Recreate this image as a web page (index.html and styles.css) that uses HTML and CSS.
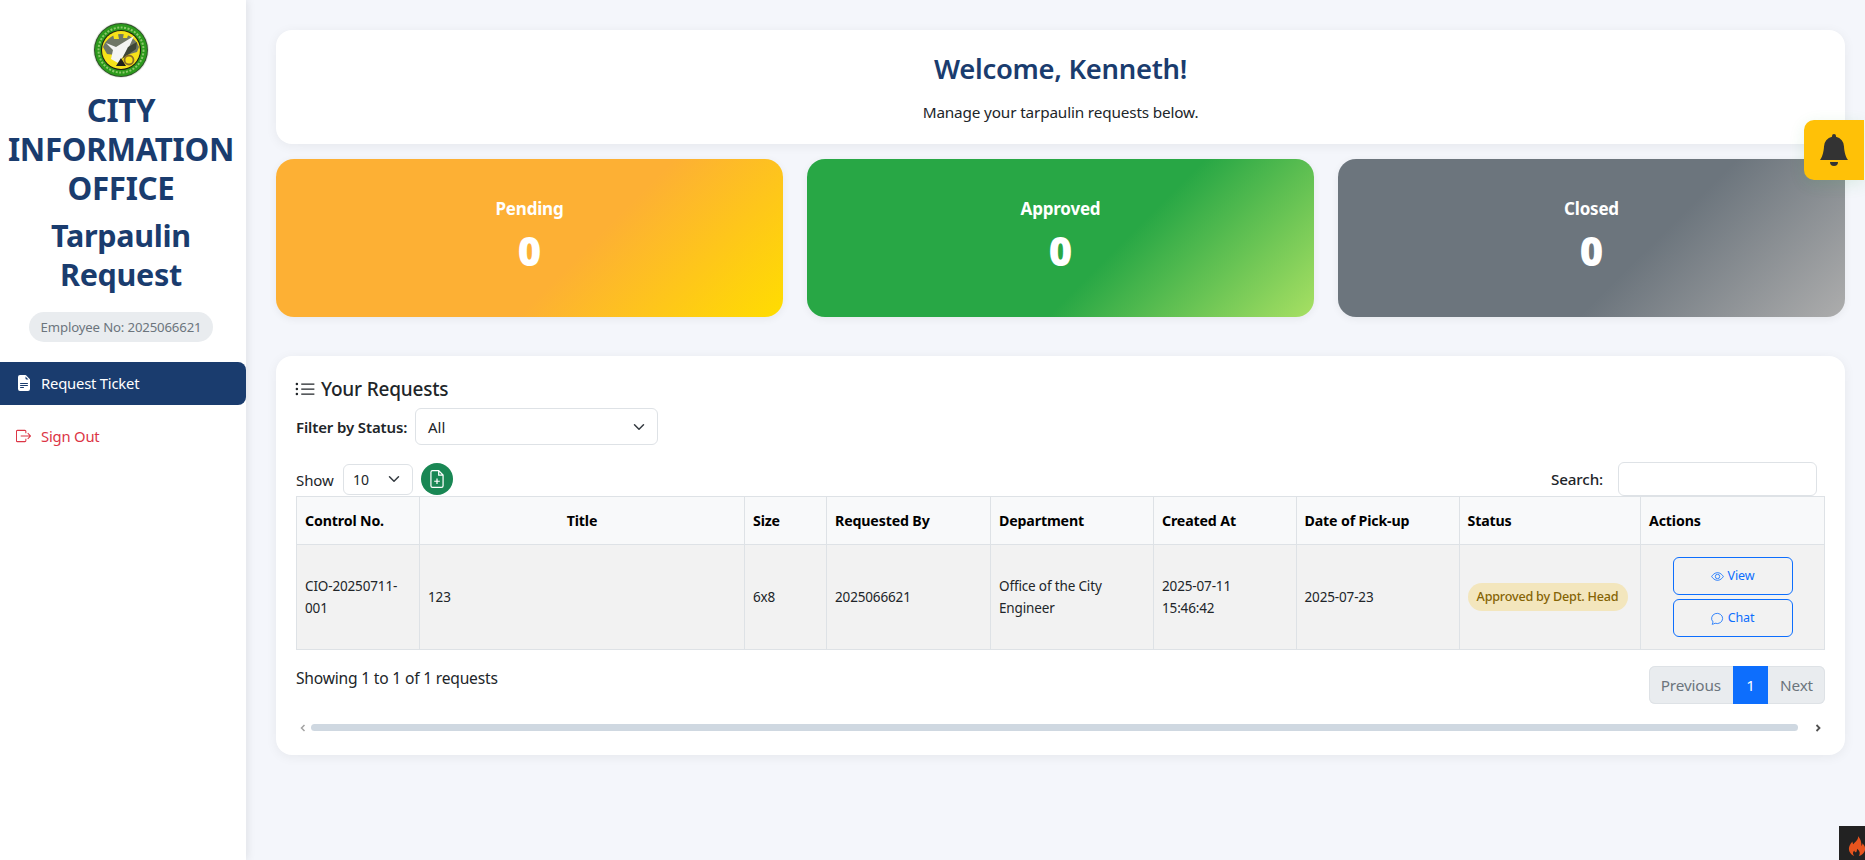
FILE: index.html
```html
<!DOCTYPE html>
<html lang="en">
<head>
<meta charset="utf-8">
<title>Tarpaulin Request</title>
<link rel="stylesheet" href="styles.css">
</head>
<body>
<div class="layout">
  <aside class="sidebar">
    <div class="sidebar-head">
      <svg class="logo" viewBox="0 0 56 56" aria-hidden="true">
        <circle cx="28" cy="28" r="28" fill="#e6e8e2"/>
        <circle cx="28" cy="28" r="27" fill="#2f4f2a"/>
        <circle cx="28" cy="28" r="26" fill="#2c9a1c"/>
        <circle cx="28" cy="28" r="22.500" fill="none" stroke="#cfe8a0" stroke-width="2" stroke-dasharray="2 1.500" opacity=".6"/>
        <circle cx="28" cy="28" r="20" fill="#1d1d12"/>
        <circle cx="28" cy="28" r="19" fill="#f6e21a"/>
        <path d="M10 25 A19 19 0 0 1 46 25 L44 30 L30 34 L14 32 Z" fill="#6f7766"/>
        <path d="M20 12 h5 l1 5 h-5z M31 11 h5 l-2 5 h-4z" fill="#f6e21a"/>
        <path d="M13 21 L23 25 L41 14 L35 27 L29 36 L25 41 L18 37 L20 28 Z" fill="#f4f5f2"/>
        <path d="M35 25 L44 20 L43 27 L29 37Z" fill="#3d4636"/>
        <path d="M23 44 L28 36 L33 44 Z" fill="#1f1f1a"/>
        <circle cx="36" cy="38" r="4.500" fill="none" stroke="#8a6d2a" stroke-width="1.800"/>
      </svg>
      <h1 class="brand">CITY INFORMATION OFFICE</h1>
      <h2 class="app-name">Tarpaulin Request</h2>
      <div class="employee"><span class="employee-pill">Employee No: 2025066621</span></div>
    </div>
    <nav class="nav">
      <a class="nav-item nav-active" href="#">
        <svg class="nav-icon" viewBox="0 0 14 16" fill="currentColor" aria-hidden="true"><path d="M3 0h5.300a1 1 0 0 1 .7.3l3.700 3.700a1 1 0 0 1 .3.7V14a2 2 0 0 1-2 2H3a2 2 0 0 1-2-2V2a2 2 0 0 1 2-2zm5.500 1.500v2a1 1 0 0 0 1 1h2l-3-3zM3.500 8a.5.5 0 0 0 0 1h7a.5.5 0 0 0 0-1h-7zm0 2a.5.5 0 0 0 0 1h7a.5.5 0 0 0 0-1h-7zm0 2a.5.5 0 0 0 0 1h3a.5.5 0 0 0 0-1h-3z"/></svg>
        Request Ticket
      </a>
      <a class="nav-item nav-danger" href="#">
        <svg class="nav-icon-out" viewBox="0 0 16 14" fill="none" stroke="currentColor" stroke-width="1.100" aria-hidden="true"><path d="M10.500 4V2a1 1 0 0 0-1-1H1.500a1 1 0 0 0-1 1v10a1 1 0 0 0 1 1h8a1 1 0 0 0 1-1v-2M5 7h10.500M12.500 4l3 3-3 3"/></svg>
        Sign Out
      </a>
    </nav>
  </aside>
  <main class="main">
    <section class="welcome">
      <h2 class="welcome-title">Welcome, Kenneth!</h2>
      <p class="welcome-text">Manage your tarpaulin requests below.</p>
    </section>
    <section class="stats">
      <div class="stat stat-pending"><div class="stat-label">Pending</div><div class="stat-value">0</div></div>
      <div class="stat stat-approved"><div class="stat-label">Approved</div><div class="stat-value">0</div></div>
      <div class="stat stat-closed"><div class="stat-label">Closed</div><div class="stat-value">0</div></div>
    </section>
    <section class="requests">
      <h3 class="requests-title">
        <svg class="list-icon" viewBox="0 0 16 16" fill="currentColor" aria-hidden="true"><path d="M5 3.500h10.500v1H5zM5 7.500h10.500v1H5zM5 11.500h10.500v1H5z"/><circle cx="1.500" cy="4" r="1"/><circle cx="1.500" cy="8" r="1"/><circle cx="1.500" cy="12" r="1"/></svg>
        Your Requests
      </h3>
      <div class="filter">
        <span class="filter-label">Filter by Status:</span>
        <div class="select select-status">All
          <svg class="chevron" viewBox="0 0 16 16" fill="none" stroke="currentColor" stroke-width="2" stroke-linecap="round" stroke-linejoin="round" aria-hidden="true"><path d="M2 5l6 6 6-6"/></svg>
        </div>
      </div>
      <div class="table-tools">
        <div class="tools-left">
          <span class="show-label">Show</span>
          <div class="select select-length">10
            <svg class="chevron" viewBox="0 0 16 16" fill="none" stroke="currentColor" stroke-width="2" stroke-linecap="round" stroke-linejoin="round" aria-hidden="true"><path d="M2 5l6 6 6-6"/></svg>
          </div>
          <button class="add-btn" type="button" aria-label="New request">
            <svg viewBox="0 0 16 16" fill="none" stroke="#fff" stroke-width="1.100" aria-hidden="true"><path d="M4 .6h5.500L13.400 4.500V14a1.400 1.400 0 0 1-1.400 1.400H4A1.400 1.400 0 0 1 2.600 14V2A1.400 1.400 0 0 1 4 .6zM9.500.6v3.900h3.900M8 7.500v5M5.500 10h5"/></svg>
          </button>
        </div>
        <div class="tools-right">
          <span class="search-label">Search:</span>
          <div class="search-input"></div>
        </div>
      </div>
      <table class="table">
        <colgroup>
          <col class="c1"><col class="c2"><col class="c3"><col class="c4"><col class="c5"><col class="c6"><col class="c7"><col class="c8"><col class="c9">
        </colgroup>
        <thead>
          <tr>
            <th>Control No.</th><th class="center">Title</th><th>Size</th><th>Requested By</th><th>Department</th><th>Created At</th><th>Date of Pick-up</th><th>Status</th><th>Actions</th>
          </tr>
        </thead>
        <tbody>
          <tr>
            <td>CIO-20250711-001</td>
            <td>123</td>
            <td>6x8</td>
            <td>2025066621</td>
            <td>Office of the City Engineer</td>
            <td>2025-07-11<br>15:46:42</td>
            <td>2025-07-23</td>
            <td><span class="badge">Approved by Dept. Head</span></td>
            <td class="actions">
              <a class="act" href="#">
                <svg viewBox="0 0 16 16" fill="none" stroke="currentColor" stroke-width="1" aria-hidden="true"><path d="M.8 8S3.500 3.200 8 3.200 15.200 8 15.200 8 12.500 12.800 8 12.800.8 8 .8 8z"/><circle cx="8" cy="8" r="2.700"/></svg>
                View
              </a>
              <a class="act" href="#">
                <svg viewBox="0 0 16 16" fill="none" stroke="currentColor" stroke-width="1" aria-hidden="true"><path d="M2.500 12.200A6.800 6.300 0 1 1 5 13.800c-1 .7-2.300 1.200-3.700 1.300.6-.8 1-1.800 1.200-2.900z"/></svg>
                Chat
              </a>
            </td>
          </tr>
        </tbody>
      </table>
      <div class="table-foot">
        <div class="info">Showing 1 to 1 of 1 requests</div>
        <div class="pager">
          <span class="page">Previous</span><span class="page page-current">1</span><span class="page">Next</span>
        </div>
      </div>
      <div class="hscroll">
        <svg class="arrow" viewBox="0 0 8 8" aria-hidden="true"><path d="M5.500 1L2.500 4l3 3" fill="none" stroke="#a3a3a3" stroke-width="1.500"/></svg>
        <div class="thumb"></div>
        <svg class="arrow arrow-right" viewBox="0 0 8 8" aria-hidden="true"><path d="M2.500 1l3 3-3 3" fill="none" stroke="#505050" stroke-width="1.800"/></svg>
      </div>
    </section>
  </main>
</div>
<button class="bell" type="button" aria-label="Notifications">
  <svg viewBox="0 0 16 16" fill="#333" aria-hidden="true"><path d="M8 16a2 2 0 0 0 2-2H6a2 2 0 0 0 2 2zM8 0a1 1 0 0 0-1 1v.4A5 5 0 0 0 3 6.300c0 1.100-.5 5-2 6.700h14c-1.500-1.700-2-5.600-2-6.700a5 5 0 0 0-4-4.900V1a1 1 0 0 0-1-1z"/></svg>
</button>
<div class="ci-tab">
  <svg viewBox="0 0 20 24" aria-hidden="true"><path d="M11 1c1 4-3 6-5 9-1-1-1-2-1-3-3 3-4 6-4 8 0 4 3 7 6 8-2-2-2-4 0-6 0 1 1 2 2 2 1-1 1-3 1-4 3 2 4 5 2 8 4-1 7-4 7-8 0-3-2-5-3-6 0 1 0 2-1 3 0-4-1-8-4-11z" fill="#e8541e"/></svg>
</div>
</body>
</html>
```

FILE: styles.css
```css
* { box-sizing: border-box; }
html, body { margin: 0; padding: 0; height: 100%; overflow: hidden; }
body {
  font-family: "Noto Sans", "Open Sans", sans-serif;
  font-size: 15px;
  color: #212529;
  background: #f4f6fb;
}
a { text-decoration: none; }
.layout { display: flex; height: 860px; }

/* sidebar */
.sidebar {
  width: 246px;
  flex: none;
  background: #fff;
  box-shadow: 2px 0 8px rgba(0, 0, 0, .08);
  padding-top: 22px;
}
.sidebar-head { padding-right: 4px; text-align: center; }
.logo { display: block; width: 56px; height: 56px; margin: 0 auto; }
.brand {
  margin: 13px 0 0;
  font-size: 31.300px;
  line-height: 39px;
  font-weight: 700;
  color: #1a3c6e;
  letter-spacing: -.3px;
}
.app-name {
  margin: 8px 30px 0;
  font-size: 30.500px;
  line-height: 39px;
  font-weight: 700;
  color: #1a3c6e;
  letter-spacing: -.3px;
}
.employee { margin-top: 18px; height: 30px; }
.employee-pill {
  display: inline-block;
  height: 30px;
  width: 184px;
  line-height: 30px;
  border-radius: 15px;
  background: #e9ecef;
  color: #6c757d;
  font-size: 13.200px;
  letter-spacing: -.15px;
  white-space: nowrap;
}
.nav { margin-top: 20px; display: flex; flex-direction: column; gap: 10px; }
.nav-item {
  display: flex;
  align-items: center;
  height: 43px;
  padding: 0 0 2px 17px;
  font-size: 14.800px;
  letter-spacing: -.2px;
  border-radius: 0 8px 8px 0;
}
.nav-active { background: #1a3c6e; color: #fff; }
.nav-danger { color: #dc3545; }
.nav-icon { width: 14px; height: 16px; flex: none; margin-right: 10px; }
.nav-icon-out { width: 15px; height: 14px; flex: none; margin: 0 10px 0 -1px; }

/* main */
.main { flex: 1; min-width: 0; padding: 30px 20px 0 30px; }
.welcome {
  height: 114px;
  background: #fff;
  border-radius: 16px;
  box-shadow: 0 2px 12px rgba(0, 0, 0, .06);
  text-align: center;
  padding-top: 19px;
}
.welcome-title {
  margin: 0;
  font-size: 27.400px;
  line-height: 40px;
  font-weight: 600;
  color: #1a3c6e;
  letter-spacing: -.3px;
}
.welcome-text { margin: 11px 0 0; font-size: 15.300px; line-height: 24px; letter-spacing: -.15px; }

.stats { display: grid; grid-template-columns: repeat(3, 1fr); gap: 24px; margin-top: 15px; }
.stat {
  height: 158px;
  border-radius: 18px;
  color: #fff;
  text-align: center;
  padding-top: 37px;
  box-shadow: 0 2px 8px rgba(0, 0, 0, .06);
}
.stat-pending { background: linear-gradient(135deg, #fdb034 60%, #ffdd00 100%); }
.stat-approved { background: linear-gradient(135deg, #28a745 60%, #a8e063 100%); }
.stat-closed { background: linear-gradient(135deg, #6c757d 60%, #adadad 100%); }
.stat-label { font-size: 17px; line-height: 26px; font-weight: 700; letter-spacing: -.2px; }
.stat-value { font-size: 40px; line-height: 50px; font-weight: 900; margin-top: 4px; }

/* requests */
.requests {
  margin-top: 39px;
  height: 399px;
  background: #fff;
  border-radius: 16px;
  box-shadow: 0 2px 12px rgba(0, 0, 0, .06);
  padding: 20px 20px 0;
}
.requests-title {
  display: flex;
  align-items: center;
  gap: 6px;
  margin: 0;
  height: 28px;
  padding-bottom: 2px;
  font-size: 19px;
  font-weight: 500;
  letter-spacing: -.2px;
}
.list-icon { width: 20px; height: 20px; margin-left: -1px; }
.filter { display: flex; align-items: center; gap: 7px; margin-top: 4px; height: 37px; }
.filter-label { width: 112px; font-size: 15px; font-weight: 600; letter-spacing: -.12px; white-space: nowrap; }
.select {
  position: relative;
  background: #fff;
  border: 1px solid #dee2e6;
  border-radius: 6px;
  display: flex;
  align-items: center;
}
.select-status { width: 243px; height: 37px; padding-left: 12px; font-size: 15px; }
.select-length { width: 70px; height: 31px; padding-left: 9px; font-size: 14px; }
.chevron { position: absolute; right: 12px; top: 50%; width: 12px; height: 12px; margin-top: -6px; color: #343a40; }
.table-tools {
  display: flex;
  justify-content: space-between;
  align-items: flex-start;
  margin-top: 18px;
  height: 33px;
  padding-right: 8px;
}
.tools-left { display: flex; align-items: center; gap: 8px; height: 32px; font-size: 15px; letter-spacing: -.1px; }
.show-label { width: 39px; padding-top: 2px; }
.add-btn {
  width: 32px;
  height: 32px;
  padding: 0;
  border: 0;
  border-radius: 50%;
  background: #198754;
  display: flex;
  align-items: center;
  justify-content: center;
}
.add-btn svg { width: 18px; height: 20px; }
.tools-right { display: flex; align-items: center; gap: 15px; margin-top: -1px; }
.search-label { font-size: 15.200px; font-weight: 500; letter-spacing: -.15px; }
.search-input { width: 199px; height: 34px; background: #fff; border: 1px solid #dee2e6; border-radius: 6px; }

.table { width: 1528px; border-collapse: collapse; table-layout: fixed; font-size: 13.500px; letter-spacing: -.15px; }
.c1 { width: 123px; }
.c2 { width: 325px; }
.c3 { width: 82px; }
.c4 { width: 164px; }
.c5 { width: 163px; }
.c6 { width: 142.500px; }
.c7 { width: 163px; }
.c8 { width: 181.500px; }
.c9 { width: 184px; }
.table th, .table td { border: 1px solid #dee2e6; padding: 0 8px; text-align: left; vertical-align: middle; }
.table th { height: 48px; background: #f8f9fa; font-weight: 700; color: #000; font-size: 14.200px; white-space: nowrap; }
.table th.center { text-align: center; }
.table td { height: 105px; background: #f2f2f2; line-height: 22px; }
.badge {
  display: inline-block;
  white-space: nowrap;
  height: 28px;
  width: 160px;
  line-height: 27px;
  text-align: center;
  border-radius: 14px;
  background: #f3e6bd;
  color: #856404;
  font-size: 12.600px;
  font-weight: 500;
  letter-spacing: -.2px;
}
.table td.actions { text-align: center; }
.act {
  display: flex;
  align-items: center;
  justify-content: center;
  gap: 4px;
  width: 120px;
  height: 38px;
  margin: 0 auto 4px;
  border: 1px solid #0d6efd;
  border-radius: 6px;
  color: #0d6efd;
  font-size: 12.500px;
  letter-spacing: -.15px;
}
.act:last-child { margin-bottom: 0; }
.act svg { width: 13px; height: 13px; flex: none; }

.table-foot { display: flex; justify-content: space-between; align-items: flex-start; margin-top: 16px; height: 38px; }
.info { font-size: 15.600px; line-height: 24px; letter-spacing: -.2px; }
.pager { display: flex; height: 38px; border-radius: 6px; overflow: hidden; background: #e9ecef; box-shadow: inset 0 0 0 1px #dee2e6; color: #6c757d; font-size: 15.300px; letter-spacing: -.14px; }
.page { display: flex; align-items: center; padding: 0 12px; }
.page-current { background: #0d6efd; color: #fff; width: 35px; justify-content: center; padding: 0; }
.hscroll { display: flex; align-items: center; gap: 4px; height: 7px; margin-top: 20px; padding: 0 3px; }
.arrow { width: 8px; height: 8px; flex: none; }
.arrow-right { margin-left: 12px; }
.thumb { flex: 1; height: 7px; border-radius: 4px; background: #cfd8e1; }

/* overlays */
.bell {
  position: absolute;
  left: 1804px;
  top: 120px;
  width: 60px;
  height: 60px;
  padding: 0;
  border: 0;
  border-radius: 10px 0 0 10px;
  background: #ffc107;
  box-shadow: 0 4px 16px rgba(40, 167, 69, .12);
  display: flex;
  align-items: center;
  justify-content: center;
}
.bell svg { width: 32px; height: 32px; }
.ci-tab {
  position: absolute;
  right: 0;
  bottom: 0;
  width: 26px;
  height: 34px;
  background: #222;
  padding: 8px 0 0 9px;
  overflow: hidden;
}
.ci-tab svg { width: 18px; height: 24px; display: block; }
```
